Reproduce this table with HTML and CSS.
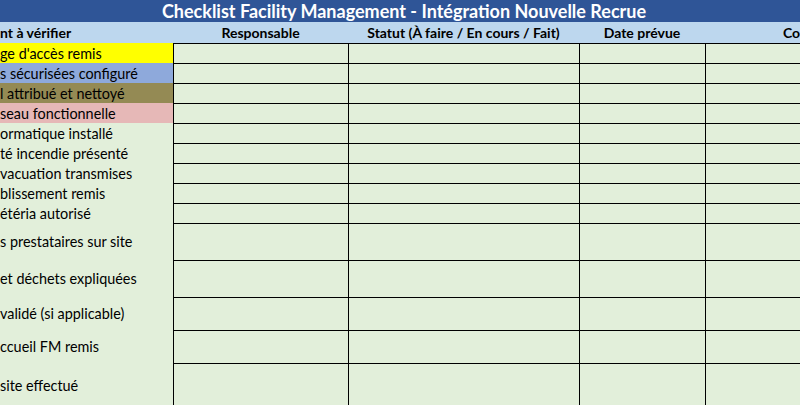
FILE: index.html
```html
<!DOCTYPE html>
<html lang="fr">
<head>
<meta charset="utf-8">
<title>Checklist Facility Management</title>
<link rel="stylesheet" href="styles.css">
</head>
<body>
<div class="sheet">
  <div class="title-bar">
    <span class="title-text">Checklist Facility Management - Intégration Nouvelle Recrue</span>
  </div>
  <table class="grid">
    <colgroup>
      <col class="c-a"><col class="c-b"><col class="c-c"><col class="c-d"><col class="c-e">
    </colgroup>
    <thead>
      <tr class="head-row">
        <th class="h-left">nt à vérifier</th>
        <th>Responsable</th>
        <th>Statut (À faire / En cours / Fait)</th>
        <th>Date prévue</th>
        <th class="h-comment">Commentaires</th>
      </tr>
    </thead>
    <tbody>
      <tr class="r20"><td class="item yellow">ge d'accès remis</td><td></td><td></td><td></td><td></td></tr>
      <tr class="r20"><td class="item blue">s sécurisées configuré</td><td></td><td></td><td></td><td></td></tr>
      <tr class="r20"><td class="item olive">l attribué et nettoyé</td><td></td><td></td><td></td><td></td></tr>
      <tr class="r20"><td class="item pink">seau fonctionnelle</td><td></td><td></td><td></td><td></td></tr>
      <tr class="r20"><td class="item">ormatique installé</td><td></td><td></td><td></td><td></td></tr>
      <tr class="r20"><td class="item">té incendie présenté</td><td></td><td></td><td></td><td></td></tr>
      <tr class="r20"><td class="item">vacuation transmises</td><td></td><td></td><td></td><td></td></tr>
      <tr class="r20"><td class="item">blissement remis</td><td></td><td></td><td></td><td></td></tr>
      <tr class="r20"><td class="item">étéria autorisé</td><td></td><td></td><td></td><td></td></tr>
      <tr class="r37"><td class="item">s prestataires sur site</td><td></td><td></td><td></td><td></td></tr>
      <tr class="r37"><td class="item">et déchets expliquées</td><td></td><td></td><td></td><td></td></tr>
      <tr class="r33"><td class="item">validé (si applicable)</td><td></td><td></td><td></td><td></td></tr>
      <tr class="r33"><td class="item">ccueil FM remis</td><td></td><td></td><td></td><td></td></tr>
      <tr class="r44"><td class="item">site effectué</td><td></td><td></td><td></td><td></td></tr>
    </tbody>
  </table>
</div>
</body>
</html>
```

FILE: styles.css
```css
html, body {
  margin: 0;
  padding: 0;
  background: #e2efda;
}

.sheet {
  width: 800px;
  height: 405px;
  overflow: hidden;
  font-family: Lato, "Liberation Sans", sans-serif;
  color: #000;
  background: #e2efda;
}

.title-bar {
  width: 808px;
  height: 22px;
  background: #2f5597;
  display: flex;
  align-items: center;
  justify-content: center;
}

.title-text {
  color: #fff;
  font-weight: 700;
  font-size: 18px;
  line-height: 22px;
  white-space: nowrap;
}

.grid {
  border-collapse: separate;
  border-spacing: 0;
  table-layout: fixed;
  width: 950px;
}

.c-a { width: 173px; }
.c-b { width: 175px; }
.c-c { width: 231px; }
.c-d { width: 126px; }
.c-e { width: 245px; }

.head-row th {
  height: 21px;
  padding: 0;
  background: #bdd7ee;
  font-size: 14px;
  font-weight: 700;
  text-align: center;
  vertical-align: middle;
  white-space: nowrap;
  overflow: hidden;
}

.head-row th.h-left {
  text-align: left;
}

.head-row th.h-comment {
  text-align: left;
  padding-left: 78px;
}

.grid td {
  padding: 0;
  background: #e2efda;
  border-left: 1px solid #000;
  border-top: 1px solid #000;
  vertical-align: middle;
  font-size: 14.4px;
  white-space: nowrap;
  overflow: hidden;
}

.grid td.item {
  border: none;
}

.r20 td { height: 19px; }
.r37 td { height: 36px; }
.r33 td { height: 32px; }
.r44 td { height: 43px; }
.r20 td.item { height: 20px; }
.r37 td.item { height: 37px; }
.r33 td.item { height: 33px; }
.r44 td.item { height: 44px; }

.yellow { background: #ffff00 !important; }
.blue { background: #8ea9db !important; }
.olive { background: #948a54 !important; }
.pink { background: #e6b8b7 !important; }
```
